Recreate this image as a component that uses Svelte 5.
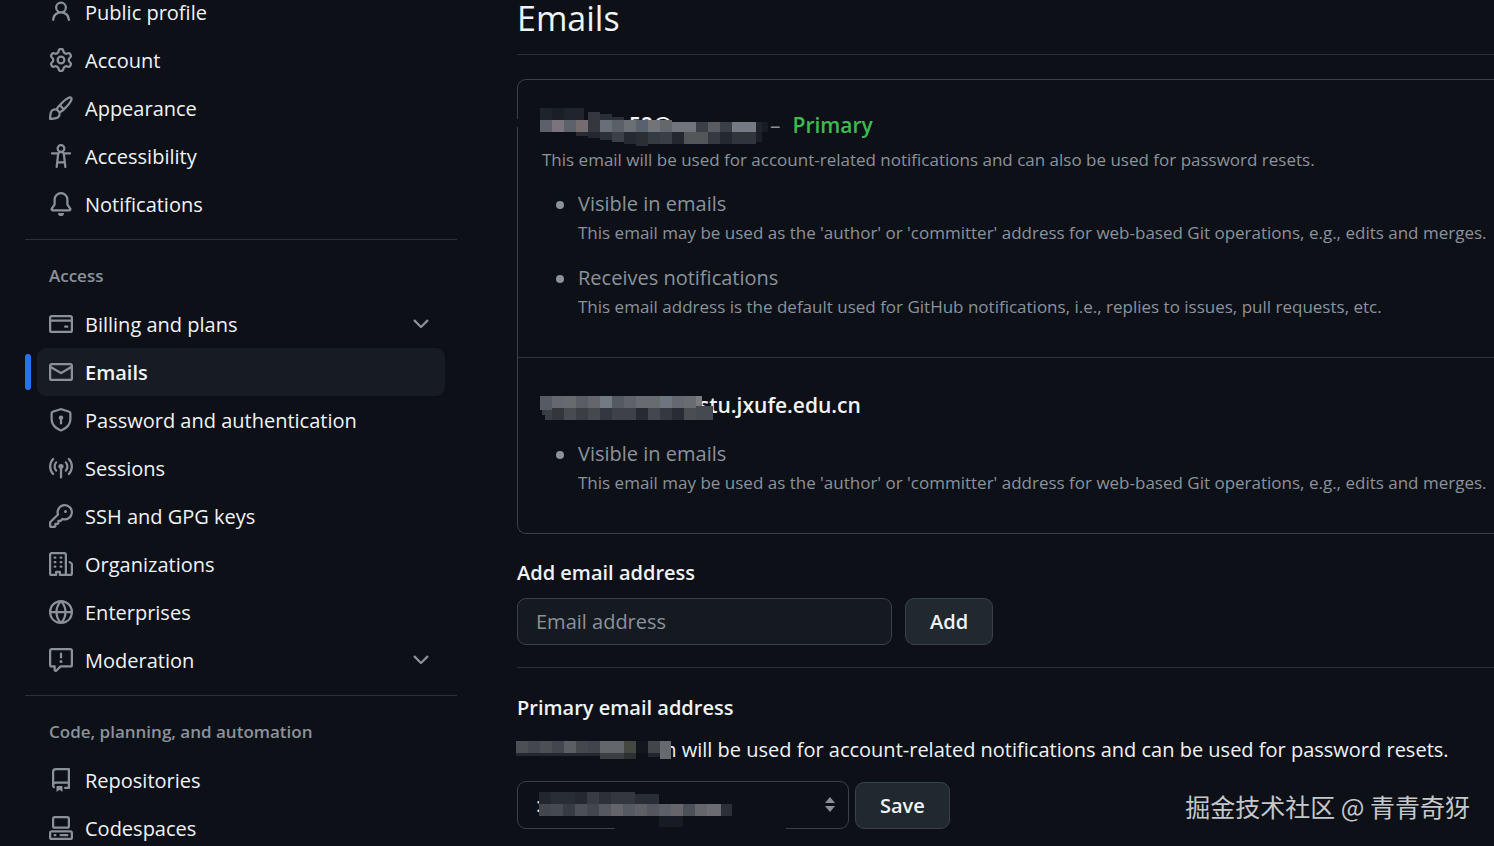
<script>
	const accountItems = [
		{ label: 'Public profile', icon: 'person' },
		{ label: 'Account', icon: 'gear' },
		{ label: 'Appearance', icon: 'paintbrush' },
		{ label: 'Accessibility', icon: 'accessibility' },
		{ label: 'Notifications', icon: 'bell' }
	];

	const accessItems = [
		{ label: 'Billing and plans', icon: 'card', expandable: true },
		{ label: 'Emails', icon: 'mail', current: true },
		{ label: 'Password and authentication', icon: 'shield' },
		{ label: 'Sessions', icon: 'broadcast' },
		{ label: 'SSH and GPG keys', icon: 'key' },
		{ label: 'Organizations', icon: 'organization' },
		{ label: 'Enterprises', icon: 'globe' },
		{ label: 'Moderation', icon: 'report', expandable: true }
	];

	const codeItems = [
		{ label: 'Repositories', icon: 'repo' },
		{ label: 'Codespaces', icon: 'codespaces' }
	];

	const groups = [
		{ title: '', items: accountItems },
		{ title: 'Access', items: accessItems },
		{ title: 'Code, planning, and automation', items: codeItems }
	];

	const visibleNote = {
		title: 'Visible in emails',
		text: "This email may be used as the 'author' or 'committer' address for web-based Git operations, e.g., edits and merges."
	};
	const receivesNote = {
		title: 'Receives notifications',
		text: 'This email address is the default used for GitHub notifications, i.e., replies to issues, pull requests, etc.'
	};

	let newEmail = $state('');

	const icons = {
		person: 'M10.561 8.073a6.005 6.005 0 0 1 3.432 5.142.75.75 0 1 1-1.498.07 4.5 4.5 0 0 0-8.99 0 .75.75 0 0 1-1.498-.07 6.004 6.004 0 0 1 3.431-5.142 3.999 3.999 0 1 1 5.123 0ZM10.5 5a2.5 2.5 0 1 0-5 0 2.5 2.5 0 0 0 5 0Z',
		gear: 'M8 0a8.2 8.2 0 0 1 .701.031C9.444.095 9.99.645 10.16 1.29l.288 1.107c.018.066.079.158.212.224.231.114.454.243.668.386.123.082.233.09.299.071l1.103-.303c.644-.176 1.392.021 1.82.63.27.385.506.792.704 1.218.315.675.111 1.422-.364 1.891l-.814.806c-.049.048-.098.147-.088.294.016.257.016.515 0 .772-.01.147.038.246.088.294l.814.806c.475.469.679 1.216.364 1.891a7.977 7.977 0 0 1-.704 1.217c-.428.61-1.176.807-1.82.63l-1.102-.302c-.067-.019-.177-.011-.3.071a5.909 5.909 0 0 1-.668.386c-.133.066-.194.158-.211.224l-.29 1.106c-.168.646-.715 1.196-1.458 1.26a8.006 8.006 0 0 1-1.402 0c-.743-.064-1.289-.614-1.458-1.26l-.289-1.106c-.018-.066-.079-.158-.212-.224a5.738 5.738 0 0 1-.668-.386c-.123-.082-.233-.09-.299-.071l-1.103.303c-.644.176-1.392-.021-1.82-.63a8.12 8.12 0 0 1-.704-1.218c-.315-.675-.111-1.422.363-1.891l.815-.806c.05-.048.098-.147.088-.294a6.214 6.214 0 0 1 0-.772c.01-.147-.038-.246-.088-.294l-.815-.806C.635 6.045.431 5.298.746 4.623a7.92 7.92 0 0 1 .704-1.217c.428-.61 1.176-.807 1.82-.63l1.102.302c.067.019.177.011.3-.071.214-.143.437-.272.668-.386.133-.066.194-.158.211-.224l.29-1.106C6.009.645 6.556.095 7.299.03 7.53.01 7.764 0 8 0Zm-.571 1.525c-.036.003-.108.036-.137.146l-.289 1.105c-.147.561-.549.967-.998 1.189-.173.086-.34.183-.5.29-.417.278-.97.423-1.529.27l-1.103-.303c-.109-.03-.175.016-.195.045-.22.312-.412.644-.573.99-.014.031-.021.11.059.19l.815.806c.411.406.562.957.53 1.456a4.709 4.709 0 0 0 0 .582c.032.499-.119 1.05-.53 1.456l-.815.806c-.081.08-.073.159-.059.19.162.346.353.677.573.989.02.03.085.076.195.046l1.102-.303c.56-.153 1.113-.008 1.53.27.161.107.328.204.501.29.447.222.85.629.997 1.189l.289 1.105c.029.109.101.143.137.146a6.6 6.6 0 0 0 1.142 0c.036-.003.108-.036.137-.146l.289-1.105c.147-.561.549-.967.998-1.189.173-.086.34-.183.5-.29.417-.278.97-.423 1.529-.27l1.103.303c.109.029.175-.016.195-.045.22-.313.411-.644.573-.99.014-.031.021-.11-.059-.19l-.815-.806c-.411-.406-.562-.957-.53-1.456a4.709 4.709 0 0 0 0-.582c-.032-.499.119-1.05.53-1.456l.815-.806c.081-.08.073-.159.059-.19a6.464 6.464 0 0 0-.573-.989c-.02-.03-.085-.076-.195-.046l-1.102.303c-.56.153-1.113.008-1.53-.27a4.44 4.44 0 0 0-.501-.29c-.447-.222-.85-.629-.997-1.189l-.289-1.105c-.029-.11-.101-.143-.137-.146a6.6 6.6 0 0 0-1.142 0ZM11 8a3 3 0 1 1-6 0 3 3 0 0 1 6 0ZM9.5 8a1.5 1.5 0 1 0-3.001.001A1.5 1.5 0 0 0 9.5 8Z',
		paintbrush: 'M11.134 1.535c.7-.509 1.416-.942 2.076-1.155.649-.21 1.463-.267 2.069.34.603.601.568 1.411.368 2.07-.202.668-.624 1.39-1.125 2.096-1.011 1.424-2.496 2.987-3.775 4.249-1.098 1.084-2.132 1.839-3.04 2.3a3.744 3.744 0 0 1-1.055 3.217c-.431.431-1.065.691-1.657.861-.614.177-1.294.287-1.914.357A21.151 21.151 0 0 1 .797 16H.743A.75.75 0 0 1 0 15.258v-.055a21.25 21.25 0 0 1 .13-2.284c.067-.647.187-1.287.358-1.914.17-.591.43-1.226.86-1.657a3.746 3.746 0 0 1 3.227-1.054c.466-.893 1.225-1.907 2.314-2.982 1.271-1.255 2.833-2.75 4.245-3.777ZM1.62 13.089c-.051.464-.086.929-.104 1.395.466-.018.932-.053 1.396-.104a10.511 10.511 0 0 0 1.668-.309c.526-.151.856-.325 1.011-.48a2.25 2.25 0 1 0-3.182-3.182c-.155.155-.329.485-.48 1.01a10.515 10.515 0 0 0-.309 1.67Zm10.396-10.34c-1.224.89-2.605 2.189-3.822 3.384l1.718 1.718c1.21-1.205 2.51-2.597 3.387-3.833.47-.662.78-1.227.912-1.662.134-.444.032-.551.009-.575h-.001V1.78c-.014-.014-.113-.113-.548.027-.432.14-.995.462-1.655.942Zm-4.832 7.266-.001.001a9.859 9.859 0 0 0 1.63-1.142L7.155 7.216a9.7 9.7 0 0 0-1.161 1.607c.482.302.889.71 1.19 1.192Z',
		accessibility: 'M9.923 5.302c.063.063.122.129.178.198H14A.75.75 0 0 1 14 7h-3.3l.578 5.163.362 2.997a.75.75 0 0 1-1.49.18L9.868 13H6.132l-.282 2.34a.75.75 0 0 1-1.49-.18l.362-2.997L5.3 7H2a.75.75 0 0 1 0-1.5h3.9a2.54 2.54 0 0 1 .176-.198 3 3 0 1 1 3.847 0ZM9.2 7.073h-.001a1.206 1.206 0 0 0-2.398 0L6.305 11.5h3.39ZM9.5 3a1.5 1.5 0 1 0-3.001.001A1.5 1.5 0 0 0 9.5 3Z',
		bell: 'M8 16a2 2 0 0 0 1.985-1.75c.017-.137-.097-.25-.235-.25h-3.5c-.138 0-.252.113-.235.25A2 2 0 0 0 8 16ZM3 5a5 5 0 0 1 10 0v2.947c0 .05.015.098.042.139l1.703 2.555A1.519 1.519 0 0 1 13.482 13H2.518a1.516 1.516 0 0 1-1.263-2.36l1.703-2.554A.255.255 0 0 0 3 7.947Zm5-3.5A3.5 3.5 0 0 0 4.5 5v2.947c0 .346-.102.683-.294.97l-1.703 2.556a.017.017 0 0 0-.003.01l.001.006c0 .002.002.004.004.006l.006.004.007.001h10.964l.007-.001.006-.004.004-.006.001-.007a.017.017 0 0 0-.003-.01l-1.703-2.554a1.745 1.745 0 0 1-.294-.97V5A3.5 3.5 0 0 0 8 1.5Z',
		card: 'M10.75 9a.75.75 0 0 0 0 1.5h1.5a.75.75 0 0 0 0-1.5h-1.5ZM0 3.75C0 2.784.784 2 1.75 2h12.5c.966 0 1.75.784 1.75 1.75v8.5A1.75 1.75 0 0 1 14.25 14H1.75A1.75 1.75 0 0 1 0 12.25ZM14.5 6.5h-13v5.75c0 .138.112.25.25.25h12.5a.25.25 0 0 0 .25-.25Zm0-2.75a.25.25 0 0 0-.25-.25H1.75a.25.25 0 0 0-.25.25V5h13Z',
		mail: 'M1.75 2h12.5c.966 0 1.75.784 1.75 1.75v8.5A1.75 1.75 0 0 1 14.25 14H1.75A1.75 1.75 0 0 1 0 12.25v-8.5C0 2.784.784 2 1.75 2ZM1.5 12.251c0 .138.112.25.25.25h12.5a.25.25 0 0 0 .25-.25V5.809L8.38 9.397a.75.75 0 0 1-.76 0L1.5 5.809v6.442Zm13-8.181v-.32a.25.25 0 0 0-.25-.25H1.75a.25.25 0 0 0-.25.25v.32L8 7.88Z',
		shield: 'm8.533.133 5.25 1.68A1.75 1.75 0 0 1 15 3.48V7c0 1.566-.32 3.182-1.303 4.682-.983 1.498-2.585 2.813-5.032 3.855a1.697 1.697 0 0 1-1.33 0c-2.447-1.042-4.049-2.357-5.032-3.855C1.32 10.182 1 8.566 1 7V3.48a1.75 1.75 0 0 1 1.217-1.667l5.25-1.68a1.748 1.748 0 0 1 1.066 0Zm-.61 1.429.001.001-5.25 1.68a.251.251 0 0 0-.174.237V7c0 1.36.275 2.666 1.057 3.859.784 1.194 2.121 2.342 4.366 3.298a.196.196 0 0 0 .154 0c2.245-.957 3.582-2.103 4.366-3.297C13.225 9.666 13.5 8.358 13.5 7V3.48a.25.25 0 0 0-.174-.238l-5.25-1.68a.25.25 0 0 0-.153 0ZM9.5 6.5c0 .536-.286 1.032-.75 1.3v2.45a.75.75 0 0 1-1.5 0V7.8A1.5 1.5 0 1 1 9.5 6.5Z',
		broadcast: 'M8.75 8.582v5.668a.75.75 0 0 1-1.5 0V8.582a1.75 1.75 0 1 1 1.5 0Zm3.983-7.125a.75.75 0 0 1 1.06.026A7.976 7.976 0 0 1 16 7c0 2.139-.84 4.083-2.207 5.517a.75.75 0 1 1-1.086-1.034A6.474 6.474 0 0 0 14.5 7a6.474 6.474 0 0 0-1.793-4.483.75.75 0 0 1 .026-1.06Zm-9.466 0c.3.286.312.76.026 1.06A6.474 6.474 0 0 0 1.5 7a6.47 6.47 0 0 0 1.793 4.483.75.75 0 0 1-1.086 1.034A7.973 7.973 0 0 1 0 7c0-2.139.84-4.083 2.207-5.517a.75.75 0 0 1 1.06-.026Zm8.556 2.321A4.988 4.988 0 0 1 13 7a4.988 4.988 0 0 1-1.177 3.222.75.75 0 1 1-1.146-.967A3.487 3.487 0 0 0 11.5 7c0-.86-.309-1.645-.823-2.255a.75.75 0 0 1 1.146-.967Zm-6.492.958A3.48 3.48 0 0 0 4.5 7a3.48 3.48 0 0 0 .823 2.255.75.75 0 0 1-1.146.967A4.981 4.981 0 0 1 3 7a4.982 4.982 0 0 1 1.188-3.236.75.75 0 1 1 1.143.972Z',
		key: 'M10.5 0a5.499 5.499 0 1 1-1.288 10.848l-.932.932a.749.749 0 0 1-.53.22H7v.75a.749.749 0 0 1-.22.53l-.5.5a.749.749 0 0 1-.53.22H5v.75a.749.749 0 0 1-.22.53l-.5.5a.749.749 0 0 1-.53.22h-2A1.75 1.75 0 0 1 0 14.25v-2c0-.199.079-.389.22-.53l4.932-4.932A5.5 5.5 0 0 1 10.5 0Zm-4 5.5c-.001.431.069.86.205 1.269a.75.75 0 0 1-.181.768L1.5 12.56v1.69c0 .138.112.25.25.25h1.69l.06-.06v-1.19a.75.75 0 0 1 .75-.75h1.19l.06-.06v-1.19a.75.75 0 0 1 .75-.75h1.19l1.023-1.025a.75.75 0 0 1 .768-.18A4 4 0 1 0 6.5 5.5ZM11 6a1 1 0 1 1 0-2 1 1 0 0 1 0 2Z',
		organization: 'M1.75 16A1.75 1.75 0 0 1 0 14.25V1.75C0 .784.784 0 1.75 0h8.5C11.216 0 12 .784 12 1.75v12.5c0 .085-.006.168-.018.25h2.268a.25.25 0 0 0 .25-.25V8.285a.25.25 0 0 0-.111-.208l-1.055-.703a.749.749 0 1 1 .832-1.248l1.055.703c.487.325.779.871.779 1.456v5.965A1.75 1.75 0 0 1 14.25 16h-3.5a.766.766 0 0 1-.197-.026c-.099.017-.2.026-.303.026h-3a.75.75 0 0 1-.75-.75V14h-1v1.25a.75.75 0 0 1-.75.75Zm-.25-1.75c0 .138.112.25.25.25H4v-1.25a.75.75 0 0 1 .75-.75h2.5a.75.75 0 0 1 .75.75v1.25h2.25a.25.25 0 0 0 .25-.25V1.75a.25.25 0 0 0-.25-.25h-8.5a.25.25 0 0 0-.25.25ZM3.75 6h.5a.75.75 0 0 1 0 1.5h-.5a.75.75 0 0 1 0-1.5ZM3 3.75A.75.75 0 0 1 3.75 3h.5a.75.75 0 0 1 0 1.5h-.5A.75.75 0 0 1 3 3.75Zm4 3A.75.75 0 0 1 7.75 6h.5a.75.75 0 0 1 0 1.5h-.5A.75.75 0 0 1 7 6.75ZM7.75 3h.5a.75.75 0 0 1 0 1.5h-.5a.75.75 0 0 1 0-1.5ZM3 9.75A.75.75 0 0 1 3.75 9h.5a.75.75 0 0 1 0 1.5h-.5A.75.75 0 0 1 3 9.75ZM7.75 9h.5a.75.75 0 0 1 0 1.5h-.5a.75.75 0 0 1 0-1.5Z',
		globe: 'M8 0a8 8 0 1 1 0 16A8 8 0 0 1 8 0ZM5.78 8.75a9.64 9.64 0 0 0 1.363 4.177c.255.426.542.832.857 1.215.245-.296.551-.705.857-1.215A9.64 9.64 0 0 0 10.22 8.75Zm4.44-1.5a9.64 9.64 0 0 0-1.363-4.177c-.307-.51-.612-.919-.857-1.215a9.927 9.927 0 0 0-.857 1.215A9.64 9.64 0 0 0 5.78 7.25Zm-5.944 1.5H1.543a6.507 6.507 0 0 0 4.666 5.5c-.123-.181-.24-.365-.352-.552-.715-1.192-1.437-2.874-1.581-4.948Zm-2.733-1.5h2.733c.144-2.074.866-3.756 1.58-4.948.12-.197.237-.381.353-.552a6.507 6.507 0 0 0-4.666 5.5Zm10.181 1.5c-.144 2.074-.866 3.756-1.58 4.948-.12.197-.237.381-.353.552a6.507 6.507 0 0 0 4.666-5.5Zm2.733-1.5a6.507 6.507 0 0 0-4.666-5.5c.123.181.24.365.353.552.714 1.192 1.436 2.874 1.58 4.948Z',
		report: 'M0 1.75C0 .784.784 0 1.75 0h12.5C15.216 0 16 .784 16 1.75v9.5A1.75 1.75 0 0 1 14.25 13H8.06l-2.573 2.573A1.458 1.458 0 0 1 3 14.543V13H1.75A1.75 1.75 0 0 1 0 11.25Zm1.75-.25a.25.25 0 0 0-.25.25v9.5c0 .138.112.25.25.25h2a.75.75 0 0 1 .75.75v2.19l2.72-2.72a.749.749 0 0 1 .53-.22h6.5a.25.25 0 0 0 .25-.25v-9.5a.25.25 0 0 0-.25-.25Zm7 2.25v2.5a.75.75 0 0 1-1.5 0v-2.5a.75.75 0 0 1 1.5 0ZM9 9a1 1 0 1 1-2 0 1 1 0 0 1 2 0Z',
		repo: 'M2 2.5A2.5 2.5 0 0 1 4.5 0h8.75a.75.75 0 0 1 .75.75v12.5a.75.75 0 0 1-.75.75h-2.5a.75.75 0 0 1 0-1.5h1.75v-2h-8a1 1 0 0 0-.714 1.7.75.75 0 1 1-1.072 1.05A2.495 2.495 0 0 1 2 11.5Zm10.5-1h-8a1 1 0 0 0-1 1v6.708A2.486 2.486 0 0 1 4.5 9h8ZM5 12.25a.25.25 0 0 1 .25-.25h3.5a.25.25 0 0 1 .25.25v3.25a.25.25 0 0 1-.4.2l-1.45-1.087a.249.249 0 0 0-.3 0L5.4 15.7a.25.25 0 0 1-.4-.2Z',
		codespaces: 'M0 11.25c0-.966.784-1.75 1.75-1.75h12.5c.966 0 1.75.784 1.75 1.75v3A1.75 1.75 0 0 1 14.25 16H1.75A1.75 1.75 0 0 1 0 14.25Zm2-9.5C2 .784 2.784 0 3.75 0h8.5C13.216 0 14 .784 14 1.75v5a1.75 1.75 0 0 1-1.75 1.75h-8.5A1.75 1.75 0 0 1 2 6.75Zm1.75-.25a.25.25 0 0 0-.25.25v5c0 .138.112.25.25.25h8.5a.25.25 0 0 0 .25-.25v-5a.25.25 0 0 0-.25-.25Zm-2 9.5a.25.25 0 0 0-.25.25v3c0 .138.112.25.25.25h12.5a.25.25 0 0 0 .25-.25v-3a.25.25 0 0 0-.25-.25ZM7 12.75a.75.75 0 0 1 .75-.75h4.5a.75.75 0 0 1 0 1.5h-4.5a.75.75 0 0 1-.75-.75Zm-4 0a.75.75 0 0 1 .75-.75h.5a.75.75 0 0 1 0 1.5h-.5a.75.75 0 0 1-.75-.75Z',
		chevron: 'M12.78 5.22a.749.749 0 0 1 0 1.06l-4.25 4.25a.749.749 0 0 1-1.06 0L3.22 6.28a.749.749 0 1 1 1.06-1.06L8 8.939l3.72-3.719a.749.749 0 0 1 1.06 0Z'
	};

	// pixelated strips over private addresses: [x, y, width, height, colour]
	const primaryMask = [
		[-24, 11, 3, 8, '#0d1117'],
		[0, 0, 12, 12, '#1f232b'], [12, 0, 12, 12, '#1a1e26'], [24, 0, 20, 12, '#20242b'],
		[48, 4, 12, 8, '#34383e'], [60, 6, 12, 6, '#292e37'], [72, 9, 12, 3, '#2a2f36'],
		[0, 12, 12, 12, '#5b606c'], [12, 12, 12, 12, '#7b747c'], [24, 12, 12, 12, '#5c616b'],
		[36, 12, 12, 12, '#756c70'], [48, 12, 12, 12, '#34383d'], [60, 12, 12, 12, '#686f7a'],
		[72, 12, 12, 12, '#5b6067'], [84, 12, 12, 12, '#6c6f74'], [96, 12, 12, 12, '#596170'],
		[108, 12, 12, 12, '#737477'], [120, 12, 12, 12, '#64676c'], [132, 14, 24, 10, '#71757b'],
		[156, 14, 12, 10, '#3b3f46'], [168, 14, 12, 10, '#5a5c61'], [180, 14, 12, 10, '#3b3f46'],
		[192, 14, 24, 10, '#757a84'], [216, 14, 6, 10, '#1f232a'], [222, 14, 6, 10, '#171b22'],
		[36, 24, 12, 4, '#282c32'], [48, 24, 12, 6, '#24282e'], [60, 24, 12, 8, '#2c3037'],
		[72, 24, 12, 10, '#3c4148'], [84, 24, 12, 12, '#252930'],
		[96, 24, 12, 14, '#2b2f34'], [108, 24, 12, 12, '#353b42'], [120, 24, 12, 12, '#3a3f46'],
		[132, 24, 12, 12, '#24282e'], [144, 24, 24, 12, '#54575a'], [168, 24, 12, 12, '#363a40'],
		[180, 24, 12, 12, '#24282f'], [192, 24, 24, 12, '#30343b'], [216, 24, 6, 10, '#1b1f26']
	];
	const secondaryMask = [
		[0, 0, 12, 14, '#565a64'], [12, 0, 12, 12, '#656870'], [24, 0, 12, 12, '#686a6e'],
		[36, 0, 12, 12, '#595d64'], [48, 0, 12, 12, '#64666c'], [60, 0, 12, 12, '#727a83'],
		[72, 0, 12, 12, '#555961'], [84, 0, 12, 12, '#5f6268'], [96, 0, 24, 12, '#686b70'],
		[120, 0, 12, 12, '#6d7580'], [132, 0, 12, 12, '#656870'], [144, 0, 12, 12, '#696c71'],
		[156, 0, 6, 12, '#7a7c80'], [2, 14, 4, 5, '#3a3e45'], [12, 12, 12, 12, '#33373c'],
		[5, 14, 7, 10, '#3a3e45'],
		[24, 12, 12, 12, '#484b50'], [36, 12, 12, 12, '#3b3e43'], [48, 12, 12, 12, '#45484c'],
		[60, 12, 12, 12, '#34383e'], [72, 12, 24, 12, '#3e4147'], [96, 12, 12, 12, '#272b31'],
		[108, 12, 12, 12, '#44474d'], [120, 12, 12, 12, '#35393f'], [132, 12, 12, 12, '#292d33'],
		[144, 12, 12, 12, '#4b4e50'], [156, 10, 17, 14, '#444a50']
	];
	const sentenceMask = [
		[0, 0, 12, 12, '#4c4f54'], [12, 0, 12, 12, '#44474d'], [24, 0, 12, 12, '#4d4f55'],
		[36, 0, 12, 12, '#43464d'], [48, 0, 12, 12, '#5c5e63'], [60, 0, 12, 12, '#45494e'],
		[72, 0, 12, 12, '#41454b'], [84, 0, 24, 12, '#63666a'], [108, 0, 12, 12, '#444841'],
		[120, 0, 12, 12, '#12161d'], [132, 0, 12, 12, '#42464a'], [144, 0, 11, 18, '#666a6e'],
		[0, 12, 84, 3, '#24282d'], [84, 12, 24, 6, '#3b3f43'], [108, 12, 12, 6, '#2c3031'],
		[132, 12, 12, 4, '#23272d']
	];
	const selectMask = [
		[0, 0, 12, 12, '#22262d'], [12, 0, 24, 12, '#292d34'], [36, 0, 12, 12, '#24282f'],
		[48, 0, 12, 12, '#393c43'], [60, 0, 12, 12, '#2c3038'], [72, 0, 24, 12, '#34383e'],
		[96, 2, 24, 10, '#292d34'], [0, 12, 12, 12, '#42464d'], [12, 12, 12, 12, '#444952'],
		[24, 12, 12, 12, '#373b42'], [36, 12, 12, 12, '#4c4f56'], [48, 12, 12, 12, '#42464f'],
		[60, 12, 12, 12, '#55585e'], [72, 12, 12, 12, '#63656b'], [84, 12, 12, 12, '#555961'],
		[96, 12, 12, 12, '#5d5f64'], [108, 12, 12, 12, '#53565d'], [120, 12, 12, 12, '#5c5f67'],
		[132, 12, 12, 12, '#67646a'], [144, 12, 12, 12, '#4b4f56'], [156, 12, 12, 12, '#64666b'],
		[168, 12, 14, 12, '#6a6c71'], [182, 12, 11, 12, '#2c3036'],
		[120, 24, 24, 12, '#171b25'], [76, 35, 171, 3, '#0d1117']
	];
</script>

{#snippet icon(name)}
	<svg class="icon" viewBox="0 0 16 16" width="24" height="24" aria-hidden="true">
		<path d={icons[name]} />
	</svg>
{/snippet}

{#snippet mask(blocks, width, height)}
	<svg class="mask" {width} {height} shape-rendering="crispEdges" aria-hidden="true">
		{#each blocks as [x, y, w, h, fill]}
			<rect {x} {y} width={w} height={h} {fill} />
		{/each}
	</svg>
{/snippet}

{#snippet notes(list)}
	<ul class="notes">
		{#each list as note}
			<li>
				<span class="note-title">{note.title}</span>
				<p class="note-text">{note.text}</p>
			</li>
		{/each}
	</ul>
{/snippet}

<div class="page">
	<nav class="sidebar" aria-label="Settings">
		{#each groups as group}
			<section class="group">
				{#if group.title}
					<h2 class="group-title">{group.title}</h2>
				{/if}
				<ul class="group-list">
					{#each group.items as item}
						<li class="nav-row" class:current={item.current}>
							{#if item.expandable}
								<button class="nav-item" type="button" aria-expanded="false">
									{@render icon(item.icon)}
									<span class="nav-label">{item.label}</span>
									{@render icon('chevron')}
								</button>
							{:else}
								<a class="nav-item" href="#{item.icon}" aria-current={item.current ? 'page' : undefined}>
									{@render icon(item.icon)}
									<span class="nav-label">{item.label}</span>
								</a>
							{/if}
						</li>
					{/each}
				</ul>
			</section>
		{/each}
	</nav>

	<main class="content">
		<h1 class="page-title">Emails</h1>

		<div class="email-box">
			<article class="email">
				<h3 class="address">
					<span class="hidden-address">
						<span class="peek">52@</span>
						{@render mask(primaryMask, 228, 34)}
					</span>
					<span class="dash">–</span>
					<span class="primary">Primary</span>
				</h3>
				<p class="about">This email will be used for account-related notifications and can also be used for password resets.</p>
				{@render notes([visibleNote, receivesNote])}
			</article>
			<article class="email">
				<h3 class="address school">
					{@render mask(secondaryMask, 173, 24)}
					<span>stu.jxufe.edu.cn</span>
				</h3>
				{@render notes([visibleNote])}
			</article>
		</div>

		<form class="add-form" onsubmit={(e) => e.preventDefault()}>
			<label class="field-label" for="new-email">Add email address</label>
			<div class="controls">
				<input id="new-email" class="field" type="email" placeholder="Email address" bind:value={newEmail} />
				<button class="btn" type="submit">Add</button>
			</div>
		</form>

		<form class="primary-form" onsubmit={(e) => e.preventDefault()}>
			<label class="field-label" for="primary-email">Primary email address</label>
			<p class="sentence">
				{@render mask(sentenceMask, 155, 18)}
				<span>m will be used for account-related notifications and can be used for password resets.</span>
			</p>
			<div class="controls tight">
				<div class="select-wrap">
					<select id="primary-email" class="field">
						<option>:</option>
					</select>
					{@render mask(selectMask, 195, 36)}
					<svg class="arrows" viewBox="0 0 12 16" width="12" height="16" aria-hidden="true">
						<path d="M6 0l5 6H1zM6 15L1 9h10z" />
					</svg>
				</div>
				<button class="btn" type="submit">Save</button>
			</div>
		</form>
	</main>

	<div class="watermark">掘金技术社区 @ 青青奇犽</div>
</div>

<style>
	:global(body) {
		margin: 0;
		background: #0d1117;
	}

	.page {
		position: relative;
		display: flex;
		gap: 60px;
		height: 100vh;
		padding-left: 25px;
		box-sizing: border-box;
		overflow: hidden;
		background: #0d1117;
		color: #f0f3f6;
		font-family: "Segoe UI", "Open Sans", "Noto Sans", "Noto Sans CJK SC", sans-serif;
		font-size: 20px;
		line-height: 32px;
	}

	h1, h2, h3, p, ul {
		margin: 0;
		padding: 0;
	}

	ul {
		list-style: none;
	}

	/* the page sits slightly scrolled */
	.sidebar {
		flex: 0 0 432px;
		margin-top: -12px;
	}

	.group + .group {
		margin-top: 11px;
		border-top: 1px solid #2b3037;
	}

	.group-title {
		padding: 20px 24px 8px;
		color: #8b929b;
		font-size: 17px;
		font-weight: 600;
	}

	.nav-row {
		position: relative;
		padding: 0 12px;
	}

	.nav-item {
		display: flex;
		align-items: center;
		gap: 12px;
		width: 100%;
		height: 48px;
		padding: 0 12px;
		box-sizing: border-box;
		border: 0;
		border-radius: 9px;
		background: none;
		color: inherit;
		font: inherit;
		text-align: left;
		text-decoration: none;
	}

	.nav-label {
		flex: 1;
		padding-top: 2px;
	}

	.current .nav-item {
		background: #171b23;
		font-weight: 600;
	}

	.current::before {
		content: '';
		position: absolute;
		left: 0;
		top: 6px;
		width: 6px;
		height: 36px;
		border-radius: 3px;
		background: #2474ea;
	}

	.icon {
		flex: none;
		fill: #8b9198;
	}

	.mask {
		flex: none;
		display: block;
		overflow: visible;
	}

	.content {
		flex: 1;
		min-width: 0;
		white-space: nowrap;
	}

	.page-title {
		padding-bottom: 18px;
		margin-bottom: 24px;
		border-bottom: 1px solid #2b3037;
		font-size: 34px;
		font-weight: 400;
		line-height: 36px;
	}

	.email-box {
		border: 1px solid #3a4047;
		border-right: 0;
		border-radius: 9px 0 0 9px;
	}

	.email {
		padding: 24px 0 37px 24px;
	}

	.email + .email {
		padding-top: 26px;
		border-top: 1px solid #2f353c;
	}

	.address {
		position: relative;
		display: flex;
		align-items: center;
		height: 42px;
		font-size: 21px;
		font-weight: 600;
	}

	.hidden-address {
		position: relative;
		margin-left: -2px;
	}

	.hidden-address .mask {
		position: relative;
	}

	.peek {
		position: absolute;
		left: 89px;
		top: 1px;
	}

	.dash {
		margin-left: 2px;
		color: #8b929b;
		font-weight: 400;
	}

	.primary {
		margin-left: 12px;
		color: #3fb950;
	}

	.school .mask {
		position: absolute;
		left: -2px;
		top: 12px;
	}

	.school span {
		padding-left: 157px;
	}

	.about {
		padding-bottom: 2px;
		color: #8b929b;
		font-size: 17px;
		line-height: 28px;
	}

	.notes {
		display: grid;
		gap: 16px;
		margin-top: 12px;
		padding-left: 36px;
		color: #8b929b;
	}

	.notes li {
		position: relative;
	}

	.notes li::before {
		content: '';
		position: absolute;
		left: -22px;
		top: 13px;
		width: 8px;
		height: 8px;
		border-radius: 50%;
		background: #8b929b;
	}

	.note-title {
		display: block;
		line-height: 31px;
	}

	.note-text {
		font-size: 17px;
		line-height: 27px;
	}

	.add-form {
		padding: 23px 0 22px;
		border-bottom: 1px solid #2b3037;
	}

	.primary-form {
		padding-top: 24px;
	}

	.field-label {
		display: block;
		font-weight: 600;
	}

	.controls {
		display: flex;
		align-items: flex-end;
		gap: 13px;
		margin-top: 9px;
	}

	.tight {
		gap: 6px;
		margin-top: 15px;
	}

	.field {
		width: 375px;
		height: 47px;
		padding: 0 18px;
		box-sizing: border-box;
		border: 1px solid #3a4047;
		border-radius: 9px;
		background: #151a21;
		color: #f0f3f6;
		font: inherit;
	}

	.field::placeholder {
		color: #8b929b;
		opacity: 1;
	}

	.btn {
		height: 47px;
		padding: 0 24px;
		border: 1px solid #3a4047;
		border-radius: 9px;
		background: #212830;
		color: #f0f3f6;
		font: inherit;
		font-weight: 600;
	}

	.sentence {
		display: flex;
		align-items: center;
		margin: 10px 0 0 -1px;
	}

	.sentence .mask {
		position: relative;
	}

	.sentence span {
		margin-left: -13px;
	}

	.select-wrap {
		position: relative;
	}

	.select-wrap .field {
		display: block;
		width: 332px;
		height: 48px;
		appearance: none;
		background: #0d1117;
	}

	.select-wrap .mask {
		position: absolute;
		left: 22px;
		top: 11px;
		pointer-events: none;
	}

	.arrows {
		position: absolute;
		right: 13px;
		top: 16px;
		fill: #8b9198;
		pointer-events: none;
	}

	.watermark {
		position: absolute;
		right: 24px;
		bottom: 24px;
		color: #c5c7ca;
		font-family: "Noto Sans CJK SC", sans-serif;
		font-size: 25px;
	}
</style>
